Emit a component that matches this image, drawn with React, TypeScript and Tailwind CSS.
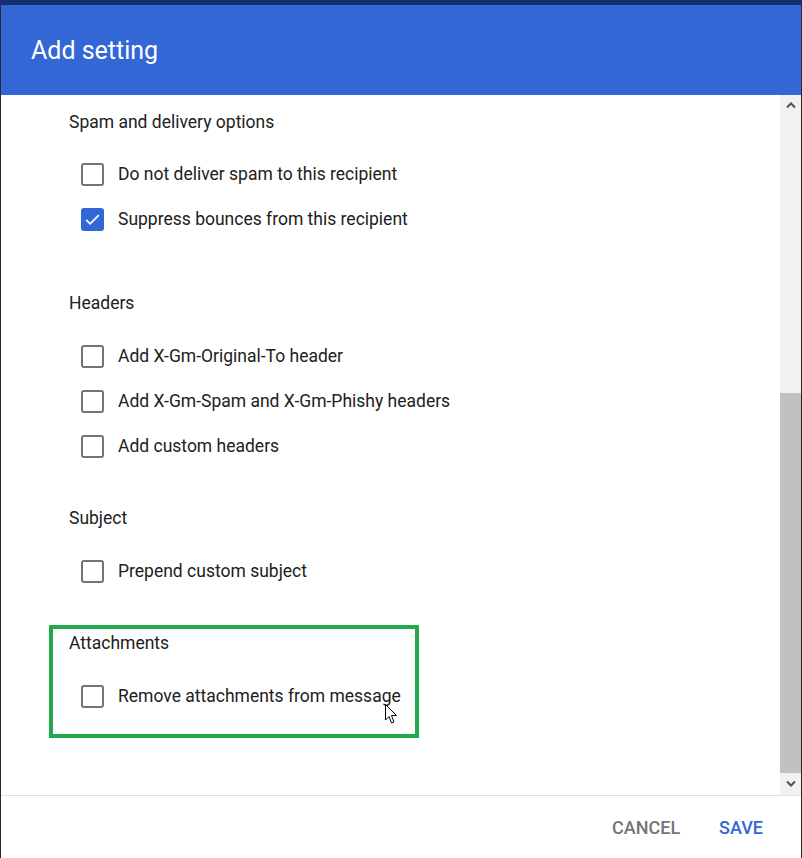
import { ReactNode } from 'react';

type Section = {
  title: string;
  options: { label: string; checked?: boolean }[];
};

const SECTIONS: Section[] = [
  {
    title: 'Spam and delivery options',
    options: [
      { label: 'Do not deliver spam to this recipient' },
      { label: 'Suppress bounces from this recipient', checked: true },
    ],
  },
  {
    title: 'Headers',
    options: [
      { label: 'Add X-Gm-Original-To header' },
      { label: 'Add X-Gm-Spam and X-Gm-Phishy headers' },
      { label: 'Add custom headers' },
    ],
  },
  {
    title: 'Subject',
    options: [{ label: 'Prepend custom subject' }],
  },
  {
    title: 'Attachments',
    options: [{ label: 'Remove attachments from message' }],
  },
];

function Checkbox({ checked }: { checked?: boolean }) {
  if (checked) {
    return (
      <span className="flex h-[23px] w-[23px] shrink-0 items-center justify-center rounded-[3px] bg-[#3367d6]">
        <svg width="19" height="19" viewBox="0 0 24 24" fill="none" stroke="white" strokeWidth="2.2">
          <path d="M4 12.5l5 5L20 6.5" />
        </svg>
      </span>
    );
  }
  return <span className="h-[23px] w-[23px] shrink-0 rounded-[3px] border-2 border-[#747474] bg-white" />;
}

function SectionBlock({ section, children, rowsGap = 'mt-[18px]' }: { section: Section; children?: ReactNode; rowsGap?: string }) {
  return (
    <div>
      <div className="flex h-6 items-center text-[17.5px] text-[#212121]">{section.title}</div>
      <div className={rowsGap}>
        {section.options.map(o => (
          <label key={o.label} className="ml-3 flex h-[45px] items-center gap-[14px] text-[17.5px] text-[#212121]">
            <Checkbox checked={o.checked} />
            <span>{o.label}</span>
          </label>
        ))}
      </div>
      {children}
    </div>
  );
}

function Cursor() {
  return (
    <svg className="absolute left-[385px] top-[704px]" width="13" height="21" viewBox="0 0 13 21">
      <path d="M0.5 0.5 L0.5 16 L4 12.5 L6.5 19 L9 18 L6.5 11.5 L11.5 11.5 Z" fill="white" stroke="black" strokeWidth="1" strokeLinejoin="round" />
    </svg>
  );
}

export default function App() {
  const [spam, headers, subject, attachments] = SECTIONS;
  return (
    <div className="relative h-[858px] w-[802px] overflow-hidden bg-[#2a2a2a]" style={{ fontFamily: 'Roboto, "Noto Sans", sans-serif' }}>
      <div className="h-[5px] bg-[#16306f]" />
      <div className="mx-px flex h-[853px] flex-col bg-white">
        <div className="flex h-[90px] items-center bg-[#3367d6] px-[30px] pt-[2px] text-[25px] text-white">Add setting</div>

        <div className="flex h-[700px]">
          <div className="flex-1 pl-[68px] pt-[15px]">
            <SectionBlock section={spam} />
            <div className="mt-[49px]">
              <SectionBlock section={headers} rowsGap="mt-[19px]" />
            </div>
            <div className="mt-[37px]">
              <SectionBlock section={subject} rowsGap="mt-[19px]" />
            </div>
            <div className="-ml-5 mt-[31px] w-[370px] border-4 border-[#22a94b] pb-[15px] pl-4 pt-[2px]">
              <SectionBlock section={attachments} rowsGap="mt-[19px]" />
            </div>
          </div>

          <div className="flex w-[21px] flex-col bg-[#f1f1f1]">
            <div className="flex h-5 items-center justify-center">
              <svg width="10" height="8" viewBox="0 0 10 8" fill="none" stroke="#505050" strokeWidth="2">
                <path d="M1 6.5L5 2.5L9 6.5" />
              </svg>
            </div>
            <div className="h-[278px]" />
            <div className="h-[380px] bg-[#c1c1c1]" />
            <div className="flex flex-1 items-center justify-center">
              <svg width="10" height="8" viewBox="0 0 10 8" fill="none" stroke="#505050" strokeWidth="2">
                <path d="M1 1.5L5 5.5L9 1.5" />
              </svg>
            </div>
          </div>
        </div>

        <div className="flex flex-1 items-center justify-end gap-[39px] border-t border-[#e0e0e0] pr-[38px] text-[18px] font-medium">
          <button className="text-[#757575]">CANCEL</button>
          <button className="text-[#3367d6]">SAVE</button>
        </div>
      </div>
      <Cursor />
    </div>
  );
}
